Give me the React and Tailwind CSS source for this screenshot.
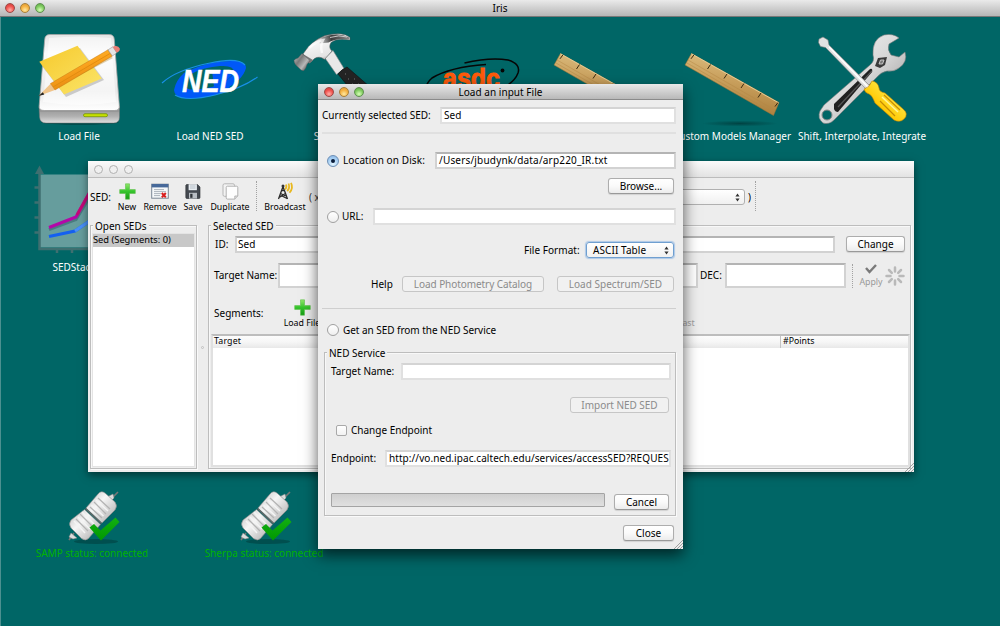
import React from "react";

const cx = (...parts) => parts.filter(Boolean).join(" ");

function Lights() {
  return (
    <div className="flex gap-[5px]">
      <span className="h-[10px] w-[10px] rounded-full border border-[#9c4a46] bg-[radial-gradient(circle_at_50%_75%,#ffb0a8,#f0504c_55%,#c8403c)]" />
      <span className="h-[10px] w-[10px] rounded-full border border-[#a8803c] bg-[radial-gradient(circle_at_50%_75%,#ffe9a0,#f5b040_55%,#d89a38)]" />
      <span className="h-[10px] w-[10px] rounded-full border border-[#5f9050] bg-[radial-gradient(circle_at_50%_75%,#d8ffb8,#80cc60_55%,#5aa444)]" />
    </div>
  );
}

function Field({ className, children, strong }) {
  return (
    <div
      className={cx(
        "box-border flex items-center overflow-hidden whitespace-nowrap border-2 bg-white",
        strong ? "border-[#d2d2d2] border-t-[#b4b4b4]" : "border-[#e0e0e0] border-t-[#d4d4d4]",
        className
      )}
    >
      {children}
    </div>
  );
}

function Button({ className, disabled, children }) {
  return (
    <button
      className={cx(
        "box-border flex h-4 items-center justify-center whitespace-nowrap rounded-[3px] border leading-none",
        disabled
          ? "border-[#c6c6c6] bg-[#f1f1f1] text-[#8b8b8b]"
          : "border-[#adadad] border-b-[#999] bg-linear-to-b from-white via-[#fafafa] to-[#ececec] text-black shadow-[0_1px_1px_rgba(0,0,0,0.12)]",
        className
      )}
    >
      {children}
    </button>
  );
}

function Radio({ checked }) {
  return (
    <span
      className={cx(
        "flex h-3 w-3 shrink-0 items-center justify-center rounded-full border",
        checked
          ? "border-[#6d8fb5] bg-[radial-gradient(circle_at_50%_80%,#e4f6ff,#a4cdf2_60%,#86b2e2)]"
          : "border-[#a0a0a0] bg-linear-to-b from-white to-[#efefef]"
      )}
    >
      {checked && <span className="h-1 w-1 rounded-full bg-[#0a1c3a]" />}
    </span>
  );
}

function Stepper() {
  return (
    <svg className="h-[9px] w-[5px] shrink-0" viewBox="0 0 5 9">
      <path d="M2.5 0.6 4.6 3.5H0.4Z M2.5 8.4 4.6 5.5H0.4Z" fill="#333" />
    </svg>
  );
}

function Plus() {
  return (
    <svg className="h-[17px] w-[17px]" viewBox="0 0 17 17">
      <defs>
        <linearGradient id="plus" x1="0" y1="0" x2="0" y2="1">
          <stop offset="0" stopColor="#8fe668" />
          <stop offset="0.5" stopColor="#35c42c" />
          <stop offset="1" stopColor="#179a14" />
        </linearGradient>
      </defs>
      <path d="M6.5.8h4v5.8h5.8v3.8h-5.8v5.8h-4v-5.8H.7V6.6h5.8Z" fill="url(#plus)" stroke="#5fc04c" strokeWidth="0.6" />
    </svg>
  );
}

function RemoveIcon() {
  return (
    <svg className="h-[17px] w-[18px]" viewBox="0 0 18 17">
      <rect x="0.7" y="1.2" width="16.6" height="14" fill="#f6f8fa" stroke="#7b8794" />
      <rect x="0.7" y="1" width="16.6" height="3.4" fill="#47699a" />
      <path d="M3 6.6h10M3 8.6h12M3 10.6h7M3 12.6h6" stroke="#a3abb5" strokeWidth="0.9" />
      <path d="m10.8 10 4 4.4m0-4.4-4 4.4" stroke="#d81e1e" strokeWidth="2" />
    </svg>
  );
}

function SaveIcon() {
  return (
    <svg className="h-[17px] w-[16px]" viewBox="0 0 16 17">
      <path d="M1.5 1.500H12.5L15 4v10.500Q15 15.500 14 15.500H2Q.8 15.500 .8 14.500V2.500Z" fill="#444950" stroke="#2a2d30" strokeWidth="0.6" />
      <rect x="3.6" y="1.2" width="8.3" height="6" fill="#e9eef2" />
      <path d="M5 3h5.500M5 5h5.500" stroke="#a9b4bf" strokeWidth="0.8" />
      <rect x="4" y="9.8" width="8" height="5.8" fill="#b9bec4" />
      <rect x="5.2" y="10.8" width="2.3" height="4" fill="#2f3338" />
    </svg>
  );
}

function DuplicateIcon() {
  return (
    <svg className="h-[17px] w-[17px]" viewBox="0 0 17 17">
      <rect x="1" y="0.8" width="11.5" height="12.5" rx="1.5" fill="#f3f3f3" stroke="#b5b5b5" />
      <path d="M5.5 3.2h9q1.3 0 1.3 1.3v8.500l-3 3.100H5.500Q4.2 16.100 4.2 14.800V4.500Q4.2 3.200 5.500 3.200Z" fill="#fdfdfd" stroke="#b0b0b0" />
      <path d="M15.8 13h-3v3.1" fill="#ddd" stroke="#aaa" strokeWidth="0.8" />
    </svg>
  );
}

function BroadcastIcon() {
  return (
    <svg className="h-[18px] w-[19px]" viewBox="0 0 19 18">
      <path d="M7 4.5 2.5 17M7 4.5l4.500 12.500M5.600 8.500h3M4.600 11.500l5 2.500M9.400 11.500l-5.500 3.200M3 15.500l3-1.500 5 2.500" stroke="#2b2b2b" strokeWidth="1.3" fill="none" />
      <circle cx="7" cy="4" r="1.5" fill="#333" />
      <path d="M10 2.500q1.200 2.700-1 5M12.500 1.500q1.800 4-1.300 7.700M15 .8q2.600 5-1.500 10" stroke="#e8b820" strokeWidth="1.8" fill="none" />
    </svg>
  );
}

function Tool({ icon, label, className }) {
  return (
    <div className={cx("flex shrink-0 flex-col items-center", className)}>
      <div className="flex h-[18px] items-center">{icon}</div>
      <span className="mt-[2px] whitespace-nowrap text-[8.8px] leading-[11px]">{label}</span>
    </div>
  );
}

const Dotted = ({ className }) => <div className={cx("w-0 shrink-0 border-l border-dotted border-[#a2a2a2]", className)} />;

function Group({ title, className, children }) {
  return (
    <section className={cx("relative box-border border border-[#bdbdbd] shadow-[1px_1px_0_#fafafa,inset_1px_1px_0_#f8f8f8]", className)}>
      <h2 className="absolute -top-[7px] left-[2px] bg-[#ededed] px-[2px] leading-[14px] whitespace-nowrap">{title}</h2>
      {children}
    </section>
  );
}

function SedWindow() {
  return (
    <div className="absolute left-[88px] top-[161px] box-border flex h-[311px] w-[826px] flex-col bg-[#ededed] shadow-[0_3px_8px_rgba(0,0,0,0.5)]">
      <div className="flex h-[17px] shrink-0 items-center gap-[6px] border-b border-[#bcbcbc] bg-linear-to-b from-[#fbfbfb] to-[#e3e3e3] pl-[6px]">
        <span className="h-[9px] w-[9px] rounded-full border border-[#b0b0b0] bg-[#f0f0f0]" />
        <span className="h-[9px] w-[9px] rounded-full border border-[#b0b0b0] bg-[#f0f0f0]" />
        <span className="h-[9px] w-[9px] rounded-full border border-[#b0b0b0] bg-[#f0f0f0]" />
      </div>
      <div className="flex h-[42px] shrink-0 pl-[2px]">
        <span className="mt-[12px] w-[24px] leading-[14px]">SED:</span>
        <Tool className="mt-[4px] w-[26px]" icon={<Plus />} label="New" />
        <Tool className="mt-[4px] w-[40px]" icon={<RemoveIcon />} label="Remove" />
        <Tool className="mt-[4px] w-[26px]" icon={<SaveIcon />} label="Save" />
        <Tool className="mt-[4px] w-[48px]" icon={<DuplicateIcon />} label="Duplicate" />
        <Dotted className="ml-[2px] mt-[3px] h-[30px]" />
        <Tool className="ml-[7px] mt-[4px] w-[42px]" icon={<BroadcastIcon />} label="Broadcast" />
        <span className="ml-[3px] mt-[12px] w-[20px] leading-[14px] text-[#333]">( x</span>
        <div className="mt-[11px] flex h-4 flex-1 items-center justify-end rounded-[3px] border border-[#b0b0b0] bg-linear-to-b from-white to-[#f0f0f0] pr-1">
          <Stepper />
        </div>
        <span className="ml-[3px] mt-[12px] w-[7px] leading-[14px]">)</span>
        <Dotted className="mr-[158px] mt-[3px] h-[30px]" />
      </div>
      <div className="flex min-h-0 flex-1 pb-[3px] pl-[2px] pr-[3px] pt-[5px]">
        <Group title="Open SEDs" className="flex w-[107px] flex-col px-px pb-px pt-[7px]">
          <div className="flex-1 border border-[#e4e4e4] bg-white">
            <div className="h-[13px] bg-[#c8c8c8] text-[9.3px] leading-[12px]">Sed (Segments: 0)</div>
          </div>
        </Group>
        <div className="flex w-[11px] items-center justify-center">
          <span className="h-[3px] w-[3px] rounded-full border border-[#c0c0c0]" />
        </div>
        <Group title="Selected SED" className="flex min-w-0 flex-1 flex-col pl-[2px]">
          <div className="mt-[9px] flex h-[18px] items-center pl-[4px] pr-[5px]">
            <span className="w-[20px]">ID:</span>
            <Field strong className="h-[17px] flex-1 pl-px">Sed</Field>
            <Button className="ml-[11px] w-[59px]">Change</Button>
          </div>
          <div className="mt-[10px] flex h-[25px] items-center pl-[3px]">
            <span className="w-[64px] whitespace-nowrap">Target Name:</span>
            <Field strong className="h-[25px] flex-1" />
            <span className="w-[27px] pl-[2px]">DEC:</span>
            <Field strong className="h-[25px] w-[121px]" />
            <Dotted className="ml-[6px] h-[24px]" />
            <div className="ml-[5px] flex w-[26px] flex-col items-center text-[#999]">
              <svg className="h-[11px] w-[12px]" viewBox="0 0 12 11">
                <path d="m1 5 3.500 4L11 2" stroke="#7a7a7a" strokeWidth="2.4" fill="none" />
              </svg>
              <span className="mt-[3px] text-[8.8px] leading-[11px]">Apply</span>
            </div>
            <svg className="mr-[4px] h-[22px] w-[22px]" viewBox="-11 -11 22 22">
              <path
                d="M0-4.500V-8.500M0 4.500V8.500M-4.500 0H-8.500M4.500 0H8.500M3.200-3.200 6-6M-3.200 3.200-6 6M3.200 3.200 6 6M-3.200-3.200-6-6"
                stroke="#b9b9b9"
                strokeWidth="2.5"
                strokeLinecap="round"
              />
            </svg>
          </div>
          <div className="flex h-[46px] pl-[3px] pt-[10px]">
            <span className="mt-[8px] w-[70px] leading-[14px]">Segments:</span>
            <Tool className="w-[36px]" icon={<Plus />} label="Load File" />
            <Tool className="ml-[334px] w-[40px] text-[#a0a0a0]" icon={null} label="Broadcast" />
          </div>
          <div className="mb-px flex flex-1 flex-col border-2 border-[#e0e0e0] border-t-[#bdbdbd] bg-white">
            <div className="flex h-[12px] bg-linear-to-b from-[#fcfcfc] via-[#f6f6f6] to-[#e8e8e8] text-[8.8px] leading-[11px]">
              <span className="w-[567px] pl-px tracking-[0.15px]">Target</span>
              <span className="border-l border-[#c4c4c4] pl-[2px]">#Points</span>
            </div>
          </div>
        </Group>
      </div>
      <Grip />
    </div>
  );
}

function Grip() {
  return (
    <svg className="absolute bottom-0 right-0 h-[9px] w-[9px]" viewBox="0 0 9 9">
      <path d="M0 9 9 0M3 9l6-6M6 9l3-3" stroke="#999" strokeWidth="0.9" />
    </svg>
  );
}

function Dialog() {
  return (
    <div className="absolute left-[318px] top-[84px] box-border flex h-[465px] w-[365px] flex-col bg-[#ededed] shadow-[0_6px_14px_rgba(0,0,0,0.65)]">
      <div className="relative flex h-[16px] shrink-0 items-center justify-center border-b border-[#8a8a8a] bg-linear-to-b from-[#e8e8e8] to-[#b8b8b8]">
        <div className="absolute left-[6px] top-[3px]">
          <Lights />
        </div>
        <span className="leading-[14px] tracking-[0.04px]">Load an input File</span>
      </div>
      <div className="flex flex-1 flex-col pl-[4px] pr-[7px]">
        <div className="mt-[7px] flex h-[17px] items-center">
          <span className="w-[118px] whitespace-nowrap">Currently selected SED:</span>
          <Field className="h-[17px] flex-1 pl-[2px]">Sed</Field>
        </div>
        <div className="mt-[8px] h-[2px] bg-[#e0e0e0]" />
        <div className="mt-[18px] flex h-[17px] items-center pl-[5px]">
          <Radio checked />
          <span className="ml-[4px] w-[92px] whitespace-nowrap tracking-[0.1px]">Location on Disk:</span>
          <Field strong className="h-[17px] flex-1 pl-[2px] tracking-[0.18px]">/Users/jbudynk/data/arp220_IR.txt</Field>
        </div>
        <div className="mt-[9px] flex h-4 justify-end pr-[2px]">
          <Button className="w-[66px]">Browse...</Button>
        </div>
        <div className="mt-[14px] flex h-[17px] items-center pl-[5px]">
          <Radio />
          <span className="ml-[3px] w-[31px]">URL:</span>
          <Field className="h-[17px] flex-1" />
        </div>
        <div className="mt-[17px] flex h-4 items-center justify-end pr-[2px]">
          <span className="w-[62px] whitespace-nowrap tracking-[0.04px]">File Format:</span>
          <div className="flex h-4 w-[88px] items-center justify-between rounded-[3px] border border-[#6f9fd0] bg-linear-to-b from-white to-[#f1f1f1] pl-[6px] pr-[4px] shadow-[0_0_1px_1px_rgba(120,170,225,0.55)]">
            <span className="tracking-[0.08px]">ASCII Table</span>
            <Stepper />
          </div>
        </div>
        <div className="mt-[18px] flex h-4 items-center justify-end pr-[2px]">
          <span className="w-[31px]">Help</span>
          <Button disabled className="w-[142px] tracking-[-0.07px]">Load Photometry Catalog</Button>
          <Button disabled className="ml-[13px] w-[117px] tracking-[0.02px]">Load Spectrum/SED</Button>
        </div>
        <div className="mt-[16px] h-px bg-[#cfcfcf]" />
        <div className="mt-[13px] flex h-4 items-center pl-[5px]">
          <Radio />
          <span className="ml-[4px] whitespace-nowrap tracking-[-0.04px]">Get an SED from the NED Service</span>
        </div>
        <Group title="NED Service" className="ml-[2px] mt-[14px] flex h-[164px] w-[352px] flex-col pl-[6px] pr-[4px]">
          <div className="mt-[10px] flex h-[17px] items-center">
            <span className="w-[70px] whitespace-nowrap">Target Name:</span>
            <Field className="h-[17px] flex-1" />
          </div>
          <div className="mt-[17px] flex h-4 justify-end pr-[2px]">
            <Button disabled className="w-[99px] tracking-[-0.03px]">Import NED SED</Button>
          </div>
          <div className="mt-[9px] flex h-4 items-center pl-[5px]">
            <span className="h-[11px] w-[11px] rounded-[2px] border border-[#a9a9a9] bg-linear-to-b from-white to-[#f2f2f2]" />
            <span className="ml-[4px] whitespace-nowrap">Change Endpoint</span>
          </div>
          <div className="mt-[12px] flex h-[17px] items-center">
            <span className="w-[54px]">Endpoint:</span>
            <Field className="h-[17px] flex-1 pl-[2px]">
              <span className="tracking-[0.07px]">http://vo.ned.ipac.caltech.edu/services/accessSED?REQUES</span>
            </Field>
          </div>
          <div className="mt-[26px] flex h-[17px] items-start justify-between pr-[2px]">
            <div className="h-[14px] w-[274px] rounded-[1px] border border-[#a4a4a4] bg-linear-to-b from-[#cfcfcf] to-[#e0e0e0]" />
            <Button className="mt-px w-[55px]">Cancel</Button>
          </div>
        </Group>
        <div className="mt-[9px] flex h-4 justify-end pr-[2px]">
          <Button className="w-[51px]">Close</Button>
        </div>
      </div>
      <Grip />
    </div>
  );
}

function DriveArt() {
  return (
    <svg className="absolute left-[30px] top-[26px] h-[104px] w-[100px]" viewBox="30 26 100 104">
      <defs>
        <linearGradient id="dtop" x1="0" y1="0" x2="0" y2="1">
          <stop offset="0" stopColor="#e4e4e4" />
          <stop offset="0.25" stopColor="#fafafa" />
          <stop offset="0.75" stopColor="#e9e9e9" />
          <stop offset="1" stopColor="#fff" />
        </linearGradient>
        <linearGradient id="dfront" x1="0" y1="0" x2="0" y2="1">
          <stop offset="0" stopColor="#8f8f8f" />
          <stop offset="0.6" stopColor="#b0b0b0" />
          <stop offset="1" stopColor="#e0e0e0" />
        </linearGradient>
        <linearGradient id="note" x1="0" y1="0" x2="1" y2="1">
          <stop offset="0" stopColor="#f6c92c" />
          <stop offset="1" stopColor="#fbe56a" />
        </linearGradient>
        <linearGradient id="pencil" x1="0" y1="0" x2="0.6" y2="1">
          <stop offset="0" stopColor="#ffd24a" />
          <stop offset="0.5" stopColor="#fba41e" />
          <stop offset="1" stopColor="#d97a0a" />
        </linearGradient>
      </defs>
      <ellipse cx="80" cy="122" rx="39" ry="3" fill="#003c3c" opacity="0.6" />
      <path d="M39 106h80.500v11q0 6-6 6H46q-6 0-6.500-6Z" fill="url(#dfront)" stroke="#6f6f6f" strokeWidth="0.5" />
      <path d="M50 34.500h59q5 0 5.300 5l5 66q.5 5-5 5H44.500q-6 0-5.300-5L44.700 39.500q.3-5 5.300-5Z" fill="url(#dtop)" stroke="#a4a4a4" strokeWidth="0.8" />
      <path d="M49 38q30-3 62 0l5 64q-36 6-73 0Z" fill="#fff" opacity="0.5" />
      <path d="M39.500 111H119" stroke="#8a8a8a" strokeWidth="0.8" />
      <rect x="83.500" y="113.700" width="24" height="3" rx="1.5" fill="#c6e000" stroke="#6d8c00" strokeWidth="0.7" />
      <path d="M41 65 80 48 104 80 66 97Z" fill="#777" opacity="0.35" />
      <path d="M39.300 61.800 77.500 45.800 101.800 78.500 64 94.500Z" fill="url(#note)" />
      <path d="M54 87 112 57" stroke="#a07000" strokeWidth="3" opacity="0.3" />
      <path d="M38.500 96 51 83.300l4 6.700Z" fill="#f0c48a" />
      <path d="M38.500 96l4.300-3.800 1.500 2.300Z" fill="#222" />
      <path d="M50.500 83.500 108 49.800l4.400 6.200L55 90Z" fill="url(#pencil)" stroke="#b86c0c" strokeWidth="0.4" />
      <path d="m53 87 57-33.500" stroke="#e08a10" strokeWidth="0.9" />
      <path d="m108 49.800 4.800-3 4 6-4.400 3.200Z" fill="#e4e4e4" stroke="#888" strokeWidth="0.5" />
      <path d="m112.600 46.800 2.500-.8q3.500-.5 4.600 2.500.8 2.500-2.900 4.300Z" fill="#e88078" />
    </svg>
  );
}

function NedArt() {
  return (
    <svg className="absolute left-[160px] top-[55px] h-[50px] w-[100px]" viewBox="160 55 100 50">
      <path
        fillRule="evenodd"
        d="M190 70Q212 60 236 61 247 63 246 68 243 80 224 90 205 99 186 98.500 174 97 174 90 176 80 184 73ZM191 74Q180 82 186 88 192 92 212 87 232 80 234 72 234 65 220 66 204 67 191 74Z"
        fill="#0058f8"
      />
      <path d="M212 70h22q-2 10-20 17Z" fill="#0058f8" />
      <path d="M190 90q20 0 34-6l8 5q-22 10-44 9-8-1-9-5Z" fill="#0058f8" />
      <path d="M162 83Q176 70 210 63 238 57 245 65" stroke="#1890e8" strokeWidth="1.2" fill="none" />
      <path d="M175 95Q186 102 215 95 243 88 257.500 77" stroke="#1890e8" strokeWidth="1.2" fill="none" />
      <text
        x="182"
        y="91.500"
        fontFamily="'Liberation Sans', sans-serif"
        fontWeight="700"
        fontStyle="italic"
        fontSize="31"
        textLength="57"
        lengthAdjust="spacingAndGlyphs"
        fill="#fff"
        stroke="#fff"
        strokeWidth="0.5"
      >
        NED
      </text>
    </svg>
  );
}

function HammerArt() {
  return (
    <svg className="absolute left-[290px] top-[30px] h-[70px] w-[90px]" viewBox="290 30 90 70">
      <defs>
        <linearGradient id="ham" x1="0" y1="0" x2="0.5" y2="1">
          <stop offset="0" stopColor="#444" />
          <stop offset="0.4" stopColor="#f4f4f4" />
          <stop offset="0.8" stopColor="#e4e4e4" />
          <stop offset="1" stopColor="#888" />
        </linearGradient>
        <linearGradient id="face" x1="0" y1="0" x2="1" y2="0.8">
          <stop offset="0" stopColor="#d0d0d0" />
          <stop offset="0.4" stopColor="#7a7a7a" />
          <stop offset="0.7" stopColor="#b8b8b8" />
          <stop offset="1" stopColor="#3c3c3c" />
        </linearGradient>
        <linearGradient id="claw" x1="0" y1="0" x2="1" y2="0">
          <stop offset="0" stopColor="#555" stopOpacity="0.200" />
          <stop offset="0.4" stopColor="#3c3c3c" />
          <stop offset="1" stopColor="#8a8a8a" />
        </linearGradient>
      </defs>
      <path d="m325 58 8-7.500 11 18-7.500 6Z" fill="#e8e8e8" stroke="#888" strokeWidth="0.6" />
      <path d="M338 74q4-5 9-7l23 20-10 14Z" fill="#242424" stroke="#111" strokeWidth="0.6" />
      <path d="M303 54Q311 41 325 35.500 343 31 350 37.500v2.500q-13-2.500-19 2.500-3 5 1 8.500l-7.500 8.500q-5-4-10-1l-4 4Z" fill="url(#ham)" stroke="#555" strokeWidth="0.5" />
      <path d="M322 37.500Q338 31.500 349.500 37.500v2q-13-2-21 3l-9 1Z" fill="url(#claw)" />
      <path d="M330 37.500q9-3 17-.5" stroke="#d4d4d4" strokeWidth="0.9" fill="none" />
      <path d="m303 54 10 6-3.500 3.500-9-6Z" fill="#777" />
      <path d="M294 60.500q1-2 4-2.500l4-4.500 8 7-3 4q-1 4-3 6-2 1-5-2.500-5-4-5-7.500Z" fill="url(#face)" stroke="#555" strokeWidth="0.4" />
      <path d="M309 48q7-7 14-8-3 5-1 13" stroke="#fff" strokeWidth="2.500" opacity="0.7" fill="none" />
      <path d="M345 74h1M348 79h1M354 79h1M352 84h1M358 84h1" stroke="#777" strokeWidth="1.2" />
    </svg>
  );
}

function AsdcArt() {
  return (
    <svg className="absolute left-[420px] top-[50px] h-[60px] w-[110px]" viewBox="420 50 110 60">
      <path d="M464.500 63Q490 57 508 60 521 64 518 73 514 84 496 91M486 64.500Q450 67 432 78 424 85 427 92" stroke="#060606" strokeWidth="1.5" fill="none" />
      <text
        x="443"
        y="88"
        fontFamily="'Liberation Sans', sans-serif"
        fontWeight="700"
        fontSize="28"
        textLength="57"
        lengthAdjust="spacingAndGlyphs"
        fill="#ff5a0a"
        stroke="#ff5a0a"
        strokeWidth="1"
      >
        asdc
      </text>
      <circle cx="502.500" cy="70.500" r="1.9" fill="#060606" />
    </svg>
  );
}

function RulerArt({ className }) {
  return (
    <svg className={cx("absolute top-[48px] h-[80px] w-[110px]", className)} viewBox="680 48 110 80">
      <defs>
        <linearGradient id="wood" x1="0.6" y1="0" x2="0.4" y2="1">
          <stop offset="0" stopColor="#dfc083" />
          <stop offset="0.45" stopColor="#c89f5c" />
          <stop offset="1" stopColor="#a87a38" />
        </linearGradient>
        <radialGradient id="rsh">
          <stop offset="0" stopColor="#003a3a" stopOpacity="0.8" />
          <stop offset="1" stopColor="#003a3a" stopOpacity="0" />
        </radialGradient>
      </defs>
      <ellipse cx="740" cy="123.500" rx="38" ry="3" fill="url(#rsh)" />
      <path d="M691.500 53.500 779 102.500 773.500 115.500 685 65Z" fill="url(#wood)" stroke="#9c7434" strokeWidth="0.5" />
      <path d="M691.500 53.800 779 103" stroke="#ecd29c" strokeWidth="0.9" />
      <path d="m688 60 85 49M687 63l86 50" stroke="#b48845" strokeWidth="0.7" opacity="0.7" />
      <path d="m694 54.800-3 4M710.500 64.500l-3 4.500M727 74l-3 4.500M744 83.500l-3 4.500M761 93l-3 4.500M778 102.500l-3 4" stroke="#3a2a10" strokeWidth="1" />
    </svg>
  );
}

function ToolsArt() {
  return (
    <svg className="absolute left-[812px] top-[28px] h-[102px] w-[104px]" viewBox="812 28 104 102">
      <defs>
        <linearGradient id="steel" x1="0" y1="0" x2="1" y2="1">
          <stop offset="0" stopColor="#fafafa" />
          <stop offset="0.5" stopColor="#d8d8d8" />
          <stop offset="1" stopColor="#8c8c8c" />
        </linearGradient>
        <linearGradient id="yel" x1="1" y1="0" x2="0" y2="1">
          <stop offset="0" stopColor="#f0a800" />
          <stop offset="0.35" stopColor="#ffe23a" />
          <stop offset="0.65" stopColor="#ffc800" />
          <stop offset="1" stopColor="#d68a00" />
        </linearGradient>
      </defs>
      <path
        d="M873 55q-1-16 11-20 9-2 15 3l-10 6q-2 6 2 11l8 2 6-5q3 10-6 16-5 4-12 3-6 1-11 7L834 120q-5 5-11 3-6-5-3-12l4-6 46-40q5-4 3-10Z"
        fill="url(#steel)"
        stroke="#7b7b7b"
        strokeWidth="0.6"
      />
      <path d="m834 104 36-35q3-1 2 3l-34 40q-3 0-4-3Z" fill="#202020" />
      <path d="m838 107 34-36" stroke="#555" strokeWidth="1.2" />
      <circle cx="827" cy="115" r="5" fill="#006666" stroke="#8a8a8a" strokeWidth="1" />
      <path d="m875 66 3-8 9-1-2 8-5 3Z" fill="#3b3b3b" />
      <path d="m879 64 1.500-4h3.500l-1.500 4Z" fill="#777" stroke="#d0d0d0" strokeWidth="0.9" />
      <path d="m819 39 4-2 5 3 1 5 41 41-3.500 3.500-41-42-5-1-2-4Z" fill="#e2e2e2" stroke="#7b7b7b" strokeWidth="0.6" />
      <path d="m829 47 39 40" stroke="#fff" strokeWidth="1.5" />
      <path d="M864 89q5-1 8-8 6 1 7 7 0 4 6 5l18 16q6 5 1 10-4 4-10 1L875 103q-3-8-6-9-4-1-5-5Z" fill="url(#yel)" stroke="#c48400" strokeWidth="0.6" />
      <path d="m880 101 15 15M884 95l16 15" stroke="#b97a00" strokeWidth="1.2" opacity="0.8" />
      <path d="m882 97 16 15" stroke="#fff59a" strokeWidth="1.5" />
    </svg>
  );
}

function ChartArt() {
  return (
    <svg className="absolute left-[30px] top-[160px] h-[100px] w-[70px]" viewBox="30 160 70 100">
      <rect x="40" y="174.500" width="60" height="73" fill="#669d9d" />
      <path d="M39.500 171v78H100M34.500 187.500h5M34.500 202.500h5M34.500 217.500h5M34.500 232.500h5M57 249v4M72 249v4" stroke="#3f6f70" strokeWidth="2.5" fill="none" />
      <path d="m39.500 165.500 4.500 8.500h-9Z" fill="#3f6f70" />
      <path d="m49 229.500 27-10L100 180" stroke="#2d5c66" strokeWidth="3" opacity="0.5" fill="none" />
      <path d="m49 227.500 27-10.500L100 174" stroke="#b408a8" strokeWidth="3" fill="none" />
      <path d="m77 215 23-41" stroke="#c40878" strokeWidth="3" />
      <path d="m49 236.500 26-5.500 25-17" stroke="#1460f0" strokeWidth="3" fill="none" />
      <path d="m75 231 25-17" stroke="#4a90f8" strokeWidth="3" />
    </svg>
  );
}

function PlugArt({ className }) {
  return (
    <svg className={cx("absolute top-[485px] h-[60px] w-[64px]", className)} viewBox="62 485 64 60">
      <defs>
        <linearGradient id="plug" x1="0" y1="0" x2="1" y2="1">
          <stop offset="0" stopColor="#bdbdbd" />
          <stop offset="0.4" stopColor="#f6f6f6" />
          <stop offset="1" stopColor="#a5a5a5" />
        </linearGradient>
        <linearGradient id="tick" x1="0" y1="0" x2="0" y2="1">
          <stop offset="0" stopColor="#12b012" />
          <stop offset="1" stopColor="#009800" />
        </linearGradient>
      </defs>
      <ellipse cx="96" cy="541.500" rx="22" ry="2.5" fill="#003f3f" opacity="0.6" />
      <path d="m69 540 5-7M112 498l6-6" stroke="#777" strokeWidth="1.6" />
      <path d="m71 533 6 5-4 1-4-2ZM107 497l6-3 1 4-4 4Z" fill="#dcdcdc" stroke="#888" strokeWidth="0.5" />
      <g stroke="#858585" strokeWidth="0.6">
        <path d="M86 508 98 494q3-4 7-1l10 9q3 4 0 8l-13 13Z" fill="url(#plug)" />
        <path d="m84.500 509.500 16 15-12 14q-3 3-7 0L71 528q-3-4 0-8Z" fill="url(#plug)" />
      </g>
      <path d="m90 507 12 11M94 502l12 12M98 498l12 11M80 514l12 12M76 519l12 12" stroke="#b4b4b4" strokeWidth="1.3" />
      <path d="m91.500 505 12 11M96 500l12 11M82 512l12 12M78 517l12 12M74 521l11 12" stroke="#f4f4f4" strokeWidth="1.5" />
      <path d="m85.500 508.500 16 15" stroke="#666" strokeWidth="1.2" />
      <path d="m89.500 527.500 4.500-3.500 6.500 6.500L115.500 517.500l4 4.500L101 540.500Z" fill="url(#tick)" />
    </svg>
  );
}

function DesktopLabel({ className, children }) {
  return (
    <span className={cx("absolute -translate-x-1/2 whitespace-nowrap leading-[14px]", className)}>{children}</span>
  );
}

export default function App() {
  return (
    <div className="relative flex h-[626px] w-[1000px] flex-col overflow-hidden bg-[#006666] font-['Noto_Sans','Open_Sans',sans-serif] text-[10px] text-black">
      <div className="relative flex h-[17px] shrink-0 items-center justify-center border-b border-[#777] bg-linear-to-b from-[#eaeaea] to-[#b6b6b6]">
        <div className="absolute left-[5px] top-[3px]">
          <Lights />
        </div>
        <span className="leading-[14px]">Iris</span>
      </div>
      <div className="flex-1 border-l border-[#4d9090]" />
      <DriveArt />
      <DesktopLabel className="left-[79px] top-[129px] text-white">Load File</DesktopLabel>
      <NedArt />
      <DesktopLabel className="left-[210px] top-[129px] text-white">Load NED SED</DesktopLabel>
      <HammerArt />
      <DesktopLabel className="left-[341px] top-[129px] text-white">SED Builder</DesktopLabel>
      <AsdcArt />
      <RulerArt className="left-[549px]" />
      <RulerArt className="left-[680px]" />
      <DesktopLabel className="left-[732px] top-[129px] text-white">Custom Models Manager</DesktopLabel>
      <ToolsArt />
      <DesktopLabel className="left-[862px] top-[129px] text-white">Shift, Interpolate, Integrate</DesktopLabel>
      <ChartArt />
      <DesktopLabel className="left-[79px] top-[260px] text-white">SEDStacker</DesktopLabel>
      <PlugArt className="left-[62px]" />
      <DesktopLabel className="left-[92px] top-[546px] text-[#00b400]">SAMP status: connected</DesktopLabel>
      <PlugArt className="left-[234px]" />
      <DesktopLabel className="left-[264px] top-[546px] text-[#00b400]">Sherpa status: connected</DesktopLabel>
      <SedWindow />
      <Dialog />
    </div>
  );
}
